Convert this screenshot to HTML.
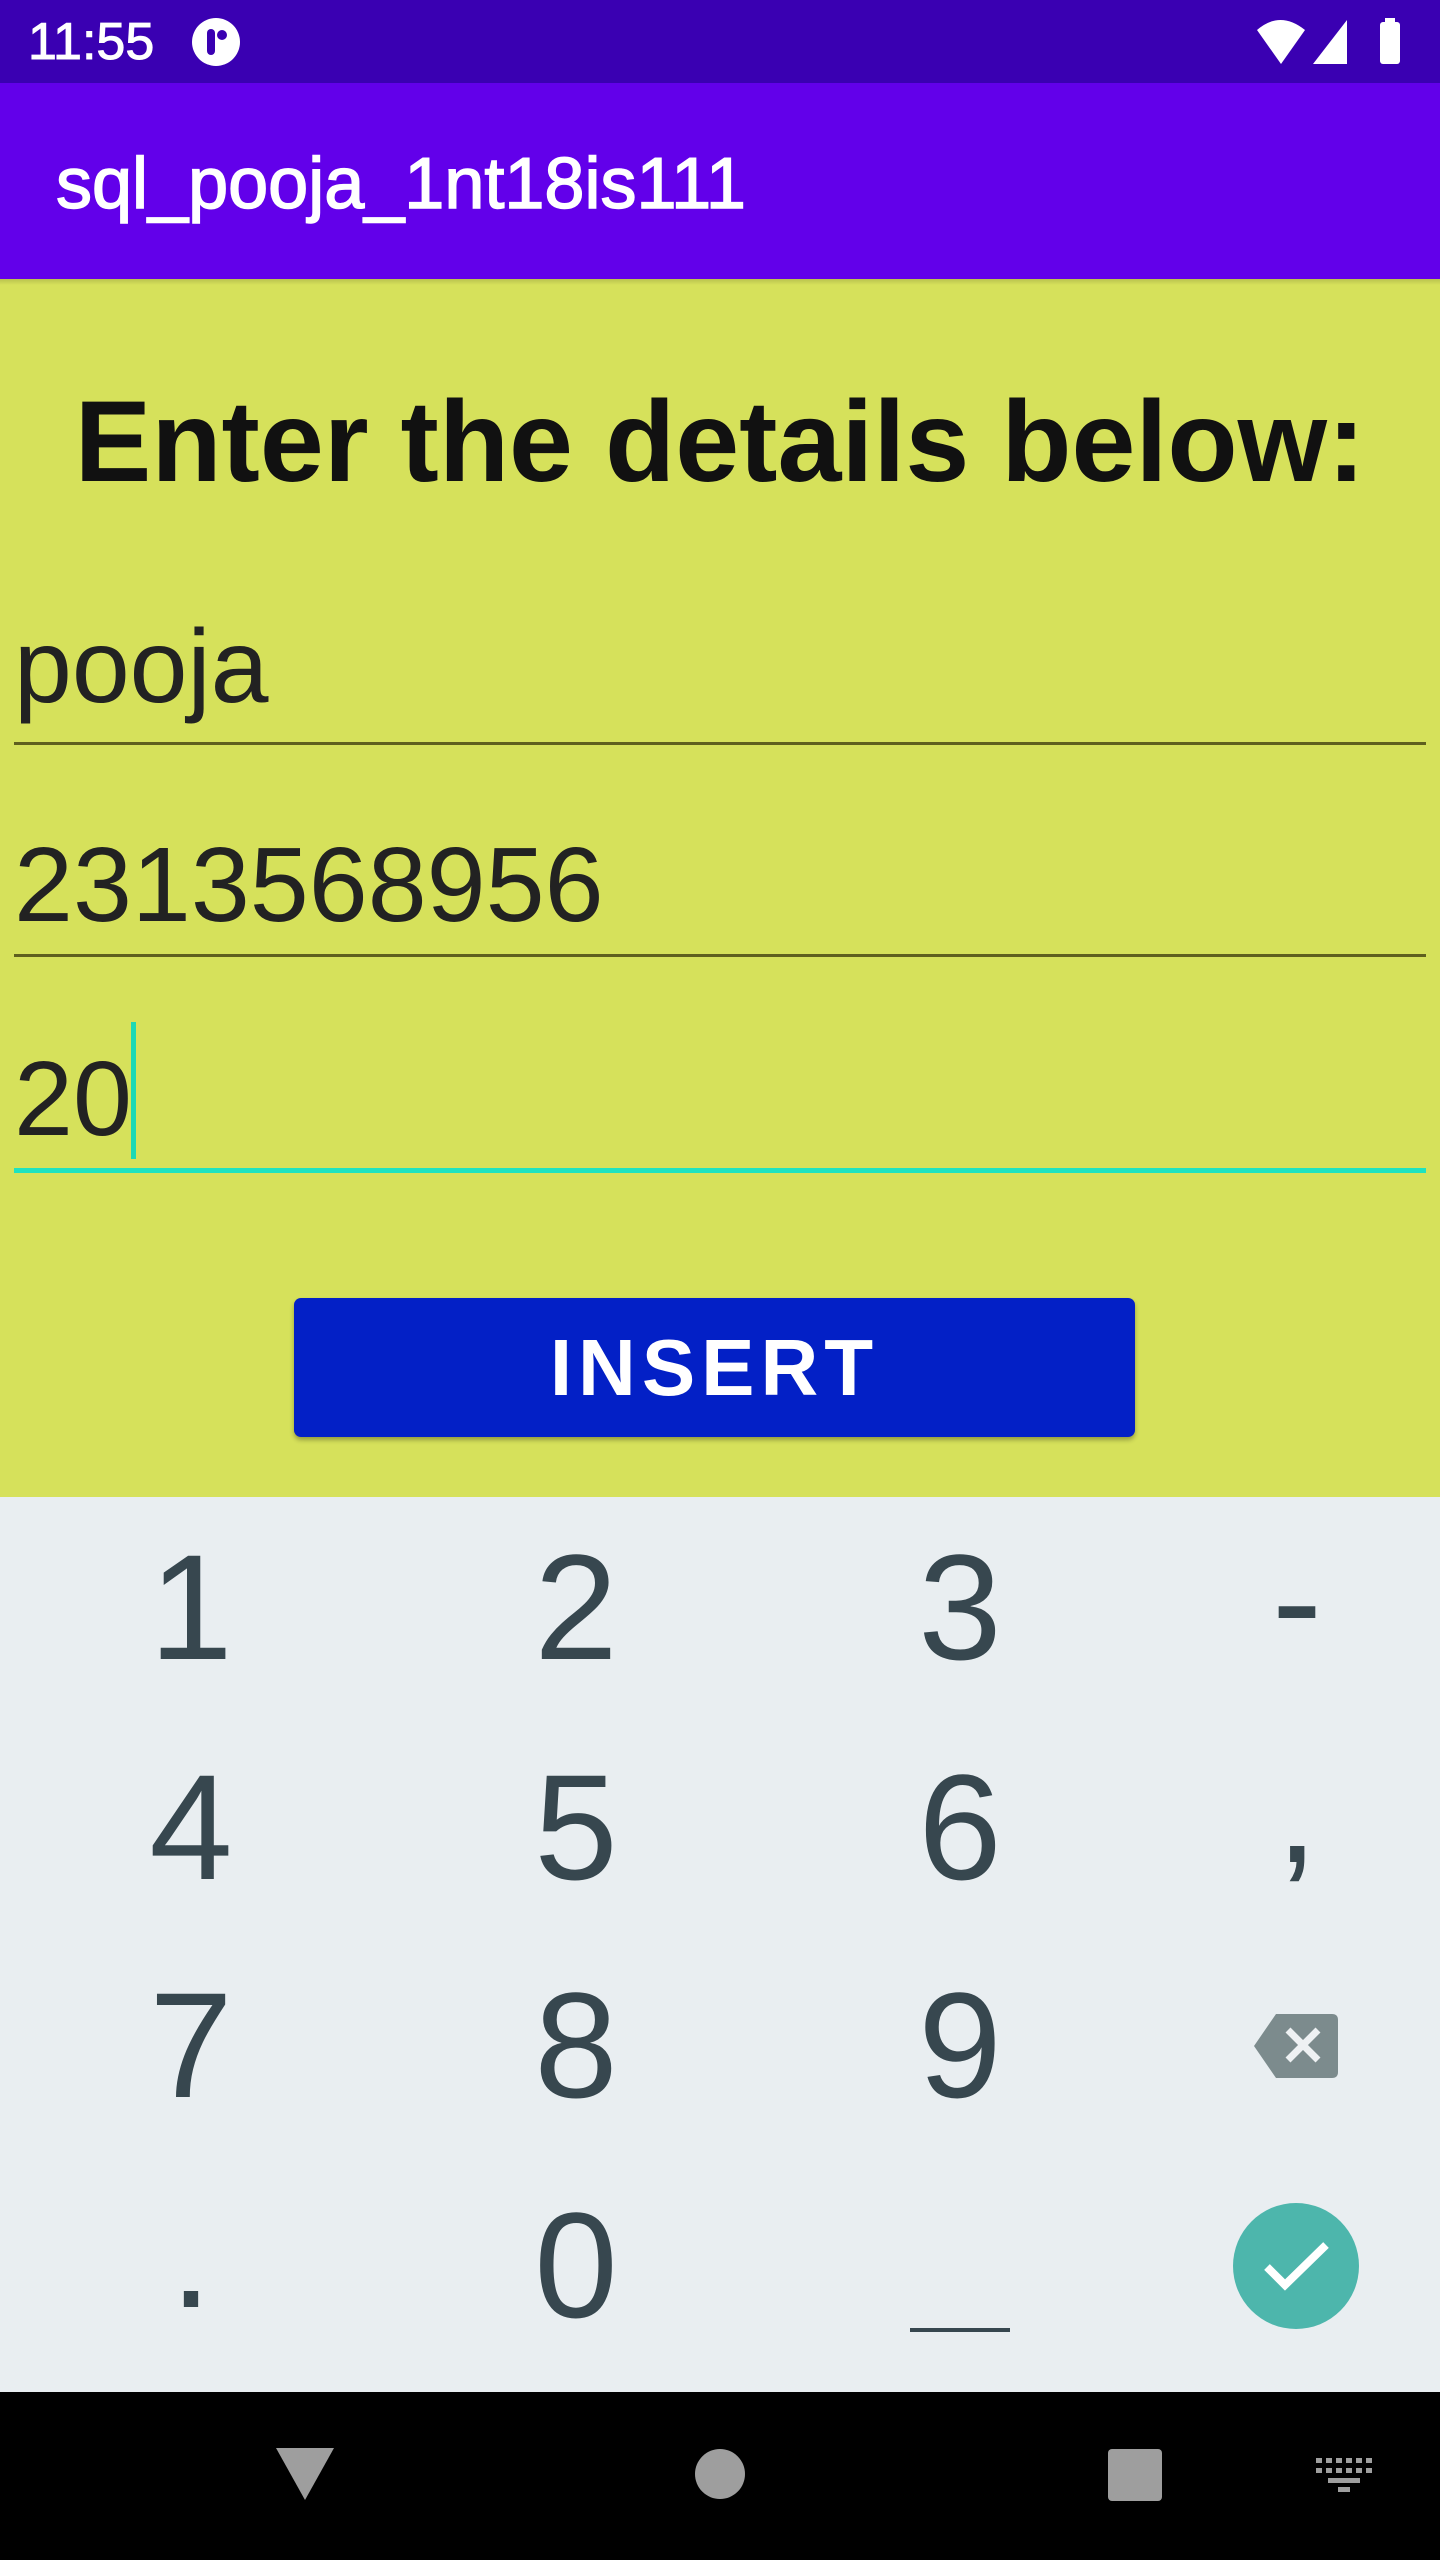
<!DOCTYPE html>
<html><head><meta charset="utf-8"><style>
*{margin:0;padding:0;box-sizing:border-box}
body{width:1440px;height:2560px;position:relative;overflow:hidden;font-family:"Liberation Sans",sans-serif;background:#d6e15b}
.abs{position:absolute}
.k{position:absolute;width:300px;margin-left:-150px;text-align:center;font-size:150px;color:#37474f;line-height:1}
</style></head><body>
<div class="abs" style="left:0;top:0;width:1440px;height:83px;background:#3a00b2"></div>
<div class="abs" style="left:28px;top:16px;font-size:52px;color:#fff;line-height:1;-webkit-text-stroke:1px #fff">11:55</div>
<svg class="abs" style="left:190px;top:16px" width="52" height="52" viewBox="0 0 52 52"><circle cx="26" cy="26" r="24" fill="#fff"/><rect x="17" y="13" width="8" height="26" rx="4" fill="#3a00b2"/><circle cx="32" cy="19" r="5" fill="#3a00b2"/></svg>
<svg class="abs" style="left:1255px;top:18px" width="180" height="48" viewBox="0 0 180 48"><path d="M2 12 Q25 -8 50 12 L26 46 Z" fill="#fff"/><path d="M58 46 L92 2 L92 46 Z" fill="#fff"/><rect x="125" y="4" width="20" height="42" rx="3" fill="#fff"/><rect x="130" y="0" width="10" height="6" fill="#fff"/></svg>
<div class="abs" style="left:0;top:83px;width:1440px;height:196px;background:#6200ea"></div>
<div class="abs" style="left:56px;top:148px;font-size:72px;color:#fff;line-height:1;-webkit-text-stroke:1.5px #fff">sql_pooja_1nt18is111</div>
<div class="abs" style="left:0;top:279px;width:1440px;height:6px;background:linear-gradient(#b9c24e,#d6e15b)"></div>
<div class="abs" style="left:0;width:1440px;top:385px;text-align:center;font-weight:bold;font-size:115px;color:#111;line-height:1">Enter the details below:</div>
<div class="abs" style="left:14px;top:615px;font-size:104px;color:#222;line-height:1">pooja</div>
<div class="abs" style="left:14px;top:742px;width:1412px;height:3px;background:#5f5f1e"></div>
<div class="abs" style="left:14px;top:832px;font-size:106px;color:#222;line-height:1">2313568956</div>
<div class="abs" style="left:14px;top:954px;width:1412px;height:3px;background:#5f5f1e"></div>
<div class="abs" style="left:14px;top:1046px;font-size:106px;color:#222;line-height:1">20</div>
<div class="abs" style="left:131px;top:1022px;width:5px;height:137px;background:#1ed9b4"></div>
<div class="abs" style="left:14px;top:1168px;width:1412px;height:5px;background:#1ee3c0"></div>
<div class="abs" style="left:294px;top:1298px;width:841px;height:139px;background:#0320c6;border-radius:7px;box-shadow:0 3px 5px rgba(0,0,0,.3);color:#fff;font-size:80px;font-weight:bold;letter-spacing:6px;text-align:center;line-height:139px">INSERT</div>
<div class="abs" style="left:0;top:1497px;width:1440px;height:895px;background:#e9eef1"></div>
<div class="k" style="left:191px;top:1532px">1</div>
<div class="k" style="left:576px;top:1532px">2</div>
<div class="k" style="left:960px;top:1532px">3</div>
<div class="k" style="left:1297px;top:1525px">-</div>
<div class="k" style="left:191px;top:1752px">4</div>
<div class="k" style="left:576px;top:1752px">5</div>
<div class="k" style="left:960px;top:1752px">6</div>
<div class="k" style="left:1297px;top:1735px">,</div>
<div class="k" style="left:191px;top:1970px">7</div>
<div class="k" style="left:576px;top:1970px">8</div>
<div class="k" style="left:960px;top:1970px">9</div>
<div class="k" style="left:191px;top:2180px">.</div>
<div class="k" style="left:576px;top:2190px">0</div>
<div class="abs" style="left:910px;top:2328px;width:100px;height:4px;background:#37474f"></div>
<svg class="abs" style="left:1254px;top:2014px" width="84" height="64" viewBox="0 0 84 64"><path d="M22 0 H78 Q84 0 84 6 V58 Q84 64 78 64 H22 L0 32 Z" fill="#7c8b8d"/><path d="M34 16 L64 46 M64 16 L34 46" stroke="#eef1f3" stroke-width="7"/></svg>
<svg class="abs" style="left:1233px;top:2203px" width="126" height="126" viewBox="0 0 126 126"><circle cx="63" cy="63" r="63" fill="#4db6ac"/><path d="M34 64 L52 82 L93 42" stroke="#fff" stroke-width="8" fill="none"/></svg>
<div class="abs" style="left:0;top:2392px;width:1440px;height:168px;background:#000"></div>
<svg class="abs" style="left:276px;top:2448px" width="58" height="52" viewBox="0 0 58 52"><path d="M0 0 H58 L29 52 Z" fill="#9e9e9e"/></svg>
<div class="abs" style="left:695px;top:2449px;width:50px;height:50px;border-radius:50%;background:#9e9e9e"></div>
<div class="abs" style="left:1108px;top:2449px;width:54px;height:52px;border-radius:4px;background:#9e9e9e"></div>
<svg class="abs" style="left:1316px;top:2458px" width="56" height="34" viewBox="0 0 56 34"><g fill="#9e9e9e"><rect x="0" y="0" width="6" height="5"/><rect x="10" y="0" width="6" height="5"/><rect x="20" y="0" width="6" height="5"/><rect x="30" y="0" width="6" height="5"/><rect x="40" y="0" width="6" height="5"/><rect x="50" y="0" width="6" height="5"/><rect x="0" y="10" width="6" height="5"/><rect x="10" y="10" width="6" height="5"/><rect x="20" y="10" width="6" height="5"/><rect x="30" y="10" width="6" height="5"/><rect x="40" y="10" width="6" height="5"/><rect x="50" y="10" width="6" height="5"/><rect x="12" y="20" width="32" height="5"/><rect x="22" y="29" width="12" height="5"/></g></svg>
</body></html>
